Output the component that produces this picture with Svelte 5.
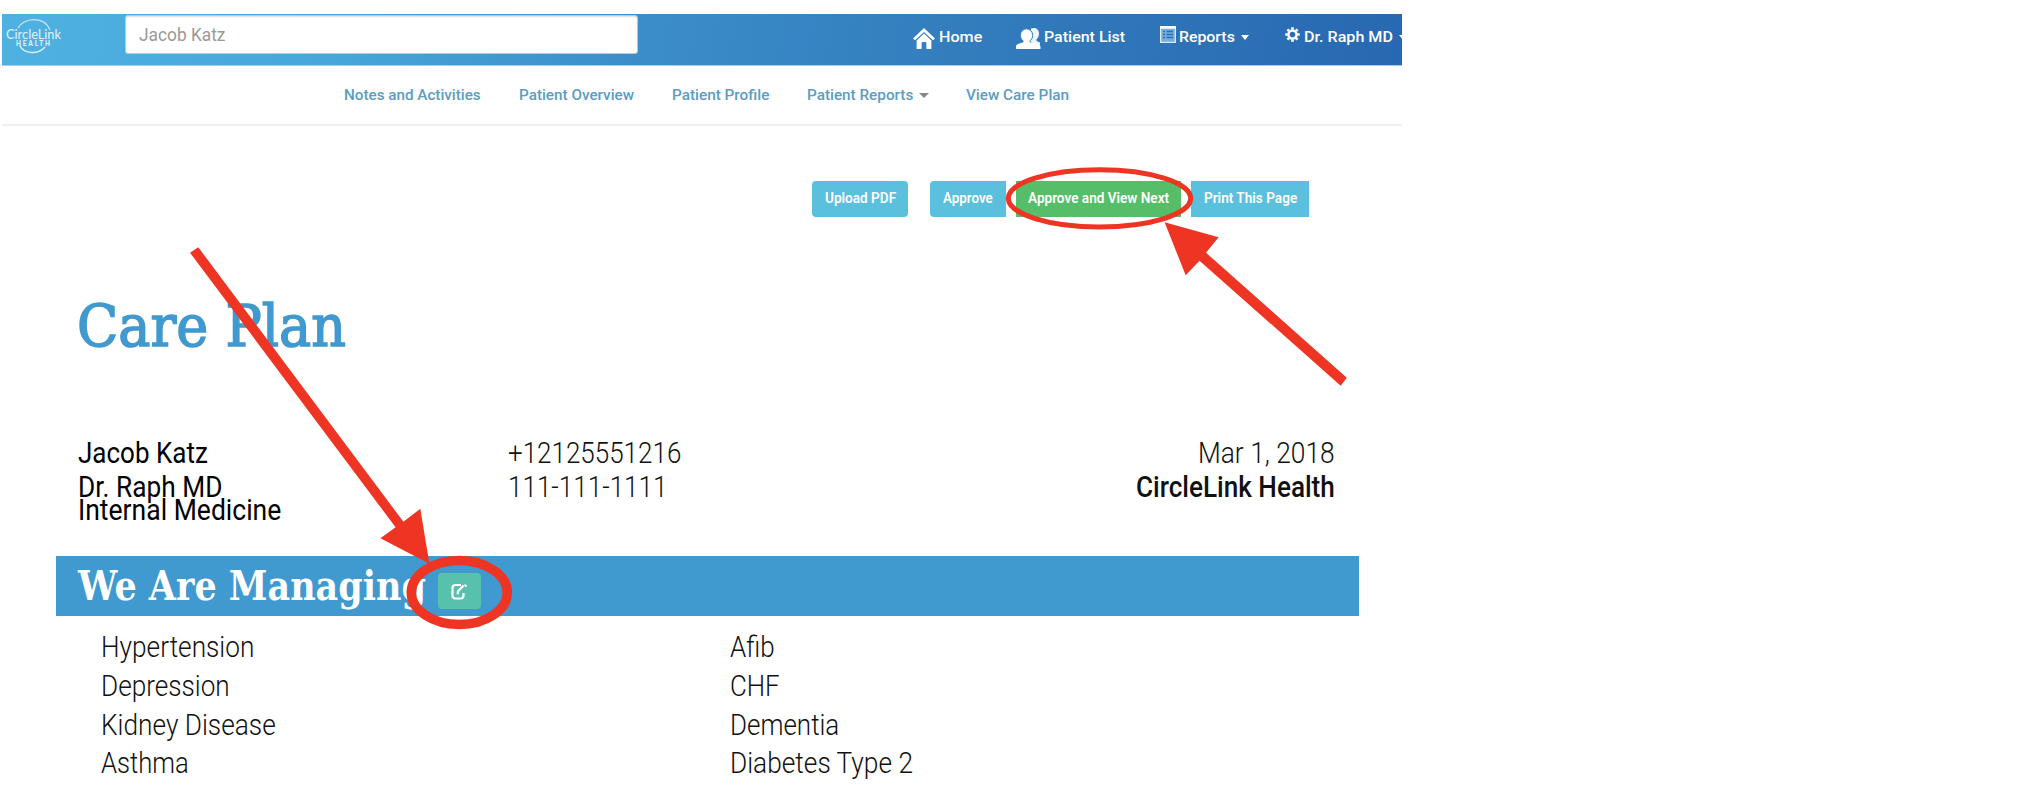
<script>
  const tabs = [
    { label: 'Notes and Activities', w: 137, gap: 342 },
    { label: 'Patient Overview', w: 115, gap: 38 },
    { label: 'Patient Profile', w: 97, gap: 38 },
    { label: 'Patient Reports', w: 106, gap: 38, caret: true },
    { label: 'View Care Plan', w: 103, gap: 37 }
  ];
  const left = [
    ['Hypertension', 153], ['Depression', 129], ['Kidney Disease', 175], ['Asthma', 88]
  ];
  const right = [
    ['Afib', 45], ['CHF', 50], ['Dementia', 109], ['Diabetes Type 2', 183]
  ];

  // Condenses a label horizontally so that it fills its box.
  function fit(node, width) {
    node.style.transform = `scaleX(${width / node.offsetWidth})`;
  }
</script>

{#snippet t(label, w)}
  <span class="box" style="width:{w}px"><span class="txt" use:fit={w}>{label}</span></span>
{/snippet}

<div class="page">
  <header>
    <svg class="logo" width="62" height="44" viewBox="0 0 62 44">
      <path d="M14 11 C19 1 40 -2 46 13" fill="none" stroke="#c9e8f8" stroke-width="1.2" />
      <path d="M16 29 C20 37 34 38 41 30" fill="none" stroke="#d9effa" stroke-width="1.6" />
      <text x="2" y="21.5" font-size="14" textLength="55" lengthAdjust="spacingAndGlyphs">CircleLink</text>
      <text x="12" y="28.7" font-size="6.5" font-weight="900" textLength="34">HEALTH</text>
    </svg>
    <div class="search">{@render t('Jacob Katz', 86)}</div>
    <nav>
      <a class="home" href="#home">
        <svg width="22" height="21" viewBox="0 0 22 21" fill="#fff">
          <path d="M11 0 0 10.4 2 12.3 11 4 20 12.3 22 10.4Z" />
          <path d="M11 5.6 3.6 12.4V21H8.6V15.2Q8.6 14 9.8 14H12.2Q13.4 14 13.4 15.2V21H18.4V12.4Z" />
        </svg>
        {@render t('Home', 43)}
      </a>
      <a class="patients" href="#patients">
        <svg width="25" height="21" viewBox="0 0 25 21" fill="#fff">
          <path d="M15 0.6C19-1 23 1 23 5.4C23 8 22 10 20.5 11.2V13L24 14.5V17H18L13 12Z" opacity=".92" />
          <ellipse cx="10.5" cy="7.4" rx="6.2" ry="6.6" stroke="#347fc0" stroke-width="1" />
          <path d="M7.5 12H13.5V14.2L20 15.8Q24.5 16.6 24.5 19V21H0V18.2Q0 16.4 2.5 15.8L7.5 14.2Z" />
        </svg>
        {@render t('Patient List', 81)}
      </a>
      <a class="reports" href="#reports">
        <svg width="16" height="17" viewBox="0 0 16 17">
          <rect x=".6" y=".6" width="14.8" height="15.8" fill="#79addb" stroke="#dcecf9" stroke-width="1.2" />
          <path d="M0 1.5H16" stroke="#fff" stroke-width="2.4" />
          <path d="M3 5.5H5M3 8.5H5M3 11.5H5M6.5 5.5H13M6.5 8.5H13M6.5 11.5H13" stroke="#276fb5" stroke-width="1.4" />
        </svg>
        {@render t('Reports', 56)}
        <i class="caret"></i>
      </a>
      <a class="account" href="#account">
        <svg width="15" height="15" viewBox="0 0 16 16">
          <circle cx="8" cy="8" r="4.3" fill="none" stroke="#fff" stroke-width="2.6" />
          <g stroke="#fff" stroke-width="2.8">
            <path d="M8 .3V3M8 13V15.7M.3 8H3M13 8H15.7M2.6 2.6 4.4 4.4M11.6 11.6 13.4 13.4M13.4 2.6 11.6 4.4M4.4 11.6 2.6 13.4" />
          </g>
        </svg>
        {@render t('Dr. Raph MD', 89)}
        <i class="caret"></i>
      </a>
    </nav>
  </header>

  <div class="tabs">
    {#each tabs as tab}
      <a href="#tab" style="margin-left:{tab.gap}px">
        {@render t(tab.label, tab.w)}
        {#if tab.caret}<i class="caret grey"></i>{/if}
      </a>
    {/each}
  </div>

  <div class="actions">
    <button class="upload">{@render t('Upload PDF', 71)}</button>
    <button class="approve">{@render t('Approve', 50)}</button>
    <button class="next">{@render t('Approve and View Next', 141)}</button>
    <button class="print">{@render t('Print This Page', 93)}</button>
  </div>

  <h1>{@render t('Care Plan', 269)}</h1>

  <section class="info">
    <div class="who">
      <div>{@render t('Jacob Katz', 130)}</div>
      <div>{@render t('Dr. Raph MD', 144)}</div>
      <div class="tight">{@render t('Internal Medicine', 203)}</div>
    </div>
    <div class="phones">
      <div>{@render t('+12125551216', 173)}</div>
      <div>{@render t('111-111-1111', 159)}</div>
    </div>
    <div class="where">
      <div>{@render t('Mar 1, 2018', 137)}</div>
      <div class="org">{@render t('CircleLink Health', 199)}</div>
    </div>
  </section>

  <h2>
    {@render t('We Are Managing', 348)}
    <span class="edit">
      <svg width="17" height="17" viewBox="0 0 17 17" fill="none" stroke="#fff">
        <path d="M10 2H4.5Q1.5 2 1.5 5V12.5Q1.5 15.5 4.5 15.5H9.5Q12.5 15.5 12.5 12.5V10" stroke-width="2.2" />
        <path d="M6.5 11.2 7.2 8 12.6 2.4" stroke-width="2.2" />
        <path d="M13.5 1.6 15.6 3.6" stroke-width="2" />
      </svg>
    </span>
  </h2>

  <section class="conditions">
    <ul>{#each left as [name, w]}<li>{@render t(name, w)}</li>{/each}</ul>
    <ul>{#each right as [name, w]}<li>{@render t(name, w)}</li>{/each}</ul>
  </section>

  <svg class="marks" width="1402" height="808" viewBox="0 0 1402 808">
    <g fill="none" stroke="#ee3524">
      <ellipse cx="1099.5" cy="198.3" rx="91.2" ry="28.6" stroke-width="5" />
      <ellipse cx="459.3" cy="592.5" rx="48" ry="32" stroke-width="9.6" />
    </g>
    <g fill="#ee3524">
      <path d="M1164.6 222.3 1218.6 237.3 1206 252.7 1346.8 377.7 1340.7 385.7 1199.5 260.7 1185.7 275.3Z" />
      <path d="M190 252.7 198.3 247.3 403.4 521.7 420.3 508.7 429.4 563.8 380.4 538.3 395.6 527.3Z" />
    </g>
  </svg>
</div>

<style>
  :global(body) { background: #fff; }
  .page {
    position: relative;
    width: 1402px;
    height: 808px;
    box-sizing: border-box;
    padding-top: 14px;
    overflow: hidden;
    font-family: Roboto, sans-serif;
    color: #111;
  }
  .box { display: inline-block; white-space: nowrap; flex: none; }
  .txt { display: inline-block; transform-origin: 0 50%; }
  a { color: inherit; text-decoration: none; display: flex; align-items: center; flex: none; }
  header {
    display: flex;
    margin-left: 2px;
    height: 52px;
    box-sizing: border-box;
    border-bottom: 1px solid #a9cbe8;
    background: linear-gradient(100deg, #4fb1e2 0%, #47a6da 24%, #3b8dca 46%, #337dbd 68%, #2868b2 100%);
  }
  .logo { margin: 3px 0 0 2px; flex: none; overflow: visible; fill: #e0f2fb; font-family: Lato, sans-serif; }
  .search {
    margin: 1px 0 0 59px;
    width: 513px;
    height: 39px;
    box-sizing: border-box;
    padding-left: 13px;
    border: 1px solid #b9cbd4;
    border-radius: 3px;
    box-shadow: inset 0 1px 2px #0002;
    background: #fff;
    color: #999;
    font-size: 17.5px;
    line-height: 39px;
    flex: none;
  }
  nav { display: flex; height: 46px; color: #fff; font-size: 15px; font-weight: 500; }
  nav a { align-items: flex-start; line-height: 18px; }
  nav .box { margin-top: 14px; }
  nav svg { flex: none; }
  .home { margin-left: 275px; }
  .home svg { margin: 14px 4px 0 0; }
  .patients { margin-left: 34px; }
  .patients svg { margin: 14px 3px 0 0; }
  .reports { margin-left: 35px; }
  .reports svg { margin: 12px 3px 0 0; }
  .account { margin-left: 35px; }
  .account svg { margin: 13px 4px 0 1px; }
  .caret {
    width: 0;
    height: 0;
    border: 4px solid transparent;
    border-top: 5px solid #fff;
    border-bottom: 0;
    margin: 21px 0 0 6px;
    flex: none;
  }
  .caret.grey { border-width: 5px 5px 0; border-top-color: #888; margin-top: 1px; }
  .tabs {
    display: flex;
    margin-left: 2px;
    height: 60px;
    box-sizing: border-box;
    border-bottom: 2px solid #f0f0f0;
    color: #5a9dc3;
    font-size: 15px;
    font-weight: 500;
  }
  .actions { display: flex; margin: 55px 0 0 812px; height: 36px; }
  button {
    border: 0;
    padding: 0 0 2px;
    height: 36px;
    background: #5bc0de;
    color: #fff;
    font: 600 15.5px Roboto, sans-serif;
    flex: none;
  }
  .upload { width: 96px; border-radius: 4px; }
  .approve { width: 76px; margin-left: 22px; border-radius: 4px 0 0 4px; }
  .next { width: 165px; margin-left: 10px; background: #56bd69; }
  .print { width: 118px; margin-left: 10px; }
  h1 {
    margin: 74px 0 0 77px;
    height: 70px;
    font: 400 58px/70px "Roboto Slab", "DejaVu Serif", serif;
    color: #4099cf;
    -webkit-text-stroke: 1.6px #4099cf;
  }
  .info {
    display: flex;
    margin: 75px 67px 0 78px;
    height: 120px;
    font-size: 29px;
    line-height: 34px;
  }
  .info div div { height: 34px; }
  .who { width: 430px; color: #000; }
  .info div.tight { line-height: 22px; height: 22px; margin-top: -5px; }
  .phones, .where { font-weight: 340; }
  .where { margin-left: auto; text-align: right; }
  .where .box { text-align: left; }
  .where .org { font-weight: 500; }
  h2 {
    display: flex;
    align-items: center;
    margin: 0 43px 0 56px;
    height: 60px;
    box-sizing: border-box;
    padding-left: 22px;
    background: #4099cf;
    color: #fff;
    font: 700 41px/60px "Roboto Slab", "DejaVu Serif", serif;
  }
  .edit {
    display: flex;
    align-items: center;
    justify-content: center;
    width: 43px;
    height: 36px;
    margin: 10px 0 0 12px;
    border-radius: 4px;
    background: #58c1ae;
  }
  .conditions {
    display: flex;
    margin: 12px 0 0 101px;
    font-size: 30px;
    font-weight: 340;
    line-height: 38.8px;
  }
  ul { list-style: none; margin: 0; padding: 0; width: 629px; }
  ul + ul { width: 600px; }
  li { height: 38.8px; }
  .marks { position: absolute; left: 0; top: 0; }
</style>
